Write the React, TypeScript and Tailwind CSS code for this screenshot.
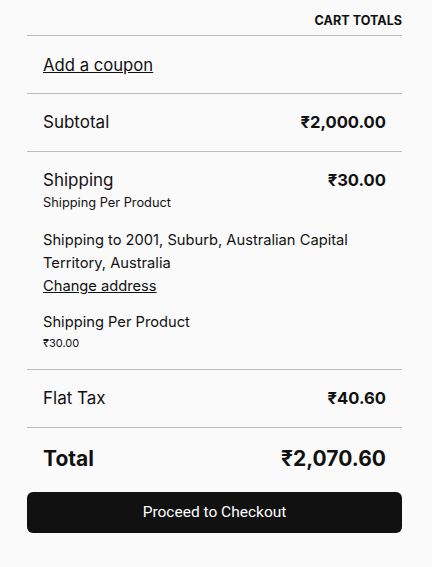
import React from "react";

export default function App() {
  return (
    <div className="min-h-[567px] w-full bg-[#fafafa] text-[#111] font-['Inter',sans-serif]">
      <div className="ml-[27px] w-[375px] pt-[13px]">
        <h2 className="text-right text-[12.6px] font-bold uppercase leading-[16px] pb-[6px]">Cart Totals</h2>
        <div className="border-t border-[#bbb] h-[58px] px-4 flex items-center">
          <a className="underline text-[16.7px] leading-[24px]">Add a coupon</a>
        </div>
        <div className="border-t border-[#bbb] h-[58px] px-4 flex items-center justify-between">
          <span className="text-[17px]">Subtotal</span>
          <span className="text-[16.6px] font-bold">₹2,000.00</span>
        </div>
        <div className="border-t border-[#bbb] px-4 pt-[17px] pb-[16px]">
          <div className="flex justify-between items-start">
            <div>
              <div className="text-[17px] leading-[22px]">Shipping</div>
              <div className="text-[12.8px] leading-[23px]">Shipping Per Product</div>
            </div>
            <span className="text-[16.6px] font-bold leading-[22px]">₹30.00</span>
          </div>
          <div className="mt-[15px] text-[14.7px] leading-[23px]">
            Shipping to 2001, Suburb, Australian Capital Territory, Australia
          </div>
          <a className="underline text-[14.7px] leading-[23px] block">Change address</a>
          <div className="mt-[13px] text-[14.7px] leading-[22px]">Shipping Per Product</div>
          <div className="text-[11px] leading-[20px]">₹30.00</div>
        </div>
        <div className="border-t border-[#bbb] h-[58px] px-4 flex items-center justify-between">
          <span className="text-[17px]">Flat Tax</span>
          <span className="text-[16.6px] font-bold">₹40.60</span>
        </div>
        <div className="border-t border-[#bbb] h-[65px] px-4 pb-[3px] flex items-center justify-between">
          <span className="text-[21px] font-bold">Total</span>
          <span className="text-[21px] font-bold">₹2,070.60</span>
        </div>
        <button className="w-full h-[41px] rounded-[6px] bg-[#111] text-white text-[15.5px] font-normal font-['Roboto',sans-serif]">
          Proceed to Checkout
        </button>
      </div>
    </div>
  );
}
